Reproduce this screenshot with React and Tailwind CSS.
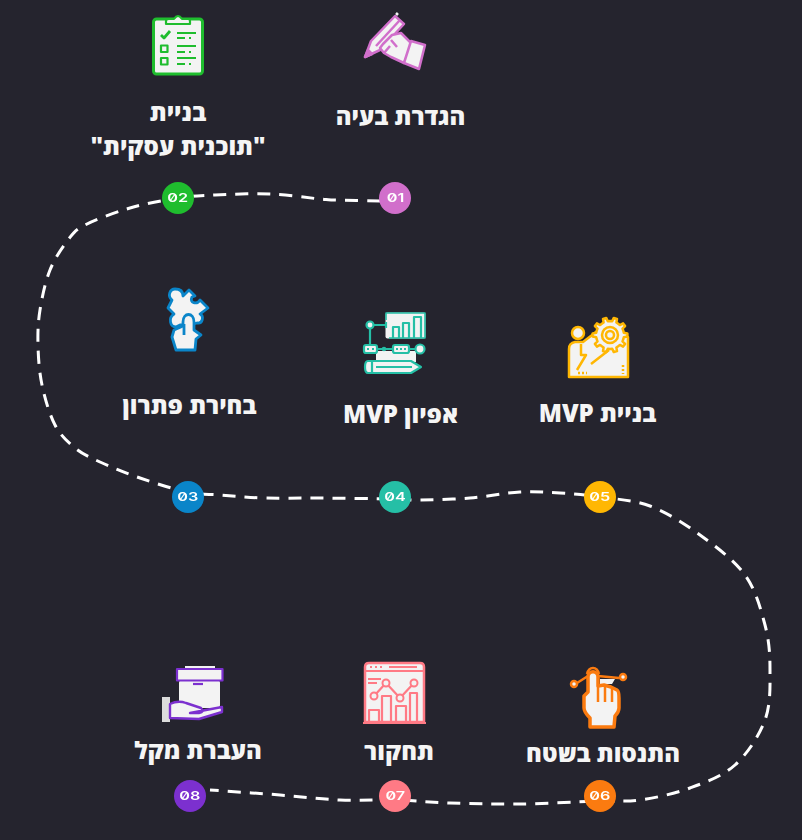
const route = [
  [380, 201], [335, 200], [320, 199], [270, 194], [215, 195], [178, 198], [130, 208], [85, 225], [68, 240], [50, 270], [40, 310],
  [38, 345], [42, 385], [55, 425], [75, 448], [100, 462], [140, 478], [187, 492], [220, 495], [265, 498], [320, 498],
  [394, 499], [420, 500], [470, 498], [520, 492], [560, 493], [600, 497], [650, 506], [700, 535], [745, 575], [765, 625],
  [770, 670], [765, 720], [735, 765], [690, 788], [640, 800], [599, 801], [520, 804], [450, 803], [395, 800], [340, 800], [280, 795], [210, 790],
];

// catmull-rom through the hand picked points
function smooth(pts) {
  let d = `M${pts[0][0]},${pts[0][1]}`;
  for (let i = 0; i < pts.length - 1; i++) {
    const p0 = pts[i - 1] || pts[i];
    const p1 = pts[i];
    const p2 = pts[i + 1];
    const p3 = pts[i + 2] || p2;
    const c1 = [p1[0] + (p2[0] - p0[0]) / 6, p1[1] + (p2[1] - p0[1]) / 6];
    const c2 = [p2[0] - (p3[0] - p1[0]) / 6, p2[1] - (p3[1] - p1[1]) / 6];
    d += ` C${c1[0].toFixed(1)},${c1[1].toFixed(1)} ${c2[0].toFixed(1)},${c2[1].toFixed(1)} ${p2[0]},${p2[1]}`;
  }
  return d;
}

function gear(cx, cy, r1, r2, n) {
  let d = '';
  const step = (Math.PI * 2) / n;
  for (let i = 0; i < n; i++) {
    const a = i * step;
    const pts = [[r1, a - step * 0.5], [r1, a - step * 0.25], [r2, a - step * 0.15], [r2, a + step * 0.15], [r1, a + step * 0.25]];
    pts.forEach(([r, t], j) => {
      d += `${i === 0 && j === 0 ? 'M' : 'L'}${(cx + r * Math.cos(t)).toFixed(1)},${(cy + r * Math.sin(t)).toFixed(1)} `;
    });
  }
  return d + 'Z';
}

const W = '#f3f3f3';

function WriteIcon({ className }) {
  const c = '#d16fcb';
  return (
    <svg viewBox="362 10 68 64" className={`h-[64px] w-[68px] shrink-0 blur-[0.6px] ${className}`} fill={W} stroke={c} strokeWidth="2.500" strokeLinejoin="round">
      <path d="M372,41 L396,16 L405,24 L381,50 L366,57 Z" />
      <path d="M377,46 L401,20" fill="none" />
      <path d="M397,13 L399,15" fill="none" stroke="#f3f3f3" />
      <path d="M366,57 L369,50 L373,54 Z" fill={c} />
      <path d="M384,44 L393,35 L402,33 L413,44 L405,63 L392,57 L385,53 L381,48 Z" />
      <path d="M392,40 L398,47 M385,53 L391,46" fill="none" />
      <path d="M412,41 L426,45 L420,69 L405,63 Z" />
    </svg>
  );
}

function ClipboardIcon({ className }) {
  const c = '#1fbd2e';
  return (
    <svg viewBox="150 10 56 68" className={`h-[68px] w-[56px] shrink-0 blur-[0.6px] ${className}`} fill="none" stroke={c} strokeWidth="2.200" strokeLinejoin="round">
      <rect x="153.500" y="19" width="49" height="55" rx="3" fill={W} strokeWidth="3" />
      <path d="M166,24 V21 Q166,19 169,19 H174 Q178,13 182,19 H188 Q190,19 190,21 V24 Z" fill={W} />
      <path d="M161,35 L164,38 L170,31" strokeWidth="2.800" />
      <path d="M177,33 H196 M177,38 H185 M189,38 H191 M177,46 H196 M177,52 H185 M189,52 H191 M177,58 H196 M177,64 H185 M189,64 H191" strokeWidth="2" />
      <rect x="161" y="45.500" width="6.500" height="6.500" />
      <rect x="161" y="58" width="6.500" height="6.500" />
    </svg>
  );
}

function PuzzleIcon({ className }) {
  const c = '#0a85c9';
  return (
    <svg viewBox="164 285 48 68" className={`h-[68px] w-[48px] shrink-0 blur-[0.6px] ${className}`} fill={W} stroke={c} strokeWidth="2.800" strokeLinejoin="round">
      <path d="M175,289 C170,289 167,296 172,300 L168,308 L174,314 C168,318 170,327 176,327 L180,325 L190,325 L197,323 C203,324 204,316 200,314 L208,308 L200,300 C197,305 189,303 192,297 L195,296 L189,290 L183,296 C183,291 180,289 175,289 Z" />
      <path d="M183,322 C183,312 194,312 194,322 L194,330 L201,335 L196,339 L195,350 L176,350 L172,337 L174,330 L183,326 Z" />
      <path d="M184,324 V335" fill="none" />
    </svg>
  );
}

function ChartIcon({ className }) {
  const c = '#25bfa6';
  return (
    <svg viewBox="360 309 68 68" className={`h-[68px] w-[68px] shrink-0 blur-[0.6px] ${className}`} fill="none" stroke={c} strokeWidth="2.200" strokeLinejoin="round">
      <rect x="384.500" y="312.500" width="40" height="26" rx="2" fill={W} stroke="none" />
      <path d="M385,320 V313 H424 V338 H388" stroke={c} strokeWidth="1.600" />
      <path d="M392,338 V327 H398 V338 M402,338 V323 H408 V338 M413,338 V317 H420 V338" strokeWidth="2.200" />
      <circle cx="369" cy="325" r="3.500" fill={W} />
      <path d="M373,325 H385 M385,322 V328 M369,329 V345" />
      <rect x="375" y="351" width="40" height="11" fill={W} stroke="none" />
      <rect x="363" y="345" width="13" height="8" rx="2" fill={W} />
      <path d="M366,349 H368 M371,349 H373" />
      <path d="M376,349 H392 M408,349 H414" />
      <circle cx="383" cy="349" r="1.200" fill={W} />
      <rect x="392" y="345" width="16" height="8" rx="2" fill={W} />
      <path d="M395,349 H397 M399,349 H401 M403,349 H405" />
      <circle cx="419" cy="349" r="4.500" fill={W} />
      <path d="M367,361 H410 L420,367 L410,373 H367 Q364,373 364,367 Q364,361 367,361 Z" fill={W} />
      <path d="M371,361 V373 M375,367 H411" />
    </svg>
  );
}

function GearIcon({ className }) {
  const c = '#ffb703';
  return (
    <svg viewBox="564 314 68 68" className={`h-[68px] w-[68px] shrink-0 blur-[0.6px] ${className}`} fill={W} stroke={c} strokeWidth="2.500" strokeLinejoin="round">
      <path d="M568,377 V349 Q568,343 574,342 L582,342 L595,332 L627,337 V377 Z" />
      <circle cx="577" cy="333" r="6" />
      <path d="M580,344 V355 H585 L576,370 M590,364 L608,350" fill="none" />
      <path d="M577,373 H586 M622,365 V374" fill="none" strokeDasharray="2 2" />
      <path d={gear(609, 335, 14, 17.500, 10)} />
      <circle cx="609" cy="335" r="8" fill={W} />
      <circle cx="609" cy="335" r="4" fill={W} />
    </svg>
  );
}

function TouchIcon({ className }) {
  const c = '#fb7b10';
  return (
    <svg viewBox="566 662 62 70" className={`h-[70px] w-[62px] shrink-0 blur-[0.6px] ${className}`} fill={W} stroke={c} strokeWidth="3.500" strokeLinejoin="round">
      <path d="M576,683 L587,676 M597,676 L618,678" fill="none" strokeWidth="2.500" />
      <path d="M586,674 C588,666 596,666 598,674" fill="none" strokeWidth="2.500" />
      <circle cx="573" cy="684" r="3" strokeWidth="2.500" />
      <circle cx="622" cy="677" r="3" strokeWidth="2.500" />
      <path d="M599,679 H614 L611,684 H599 Z" stroke="none" />
      <path d="M587,677 C587,670 597,670 597,677 L597,686 L603,685 L610,687 L616,690 Q618,691 618,698 L618,708 Q618,712 614,716 L613,727 L589,727 L589,718 Q583,712 583,708 L583,696 L587,692 Z" />
      <path d="M597,686 V702 M604,686 V702 M611,688 V702" fill="none" strokeWidth="2.500" />
    </svg>
  );
}

function ReportIcon({ className }) {
  const c = '#ff7a85';
  return (
    <svg viewBox="362 660 68 66" className={`h-[66px] w-[68px] shrink-0 blur-[0.6px] ${className}`} fill="none" stroke={c} strokeWidth="2" strokeLinejoin="round">
      <path d="M366,722 V667 Q366,663 370,663 H421 Q425,663 425,667 V722 Z" fill={W} strokeWidth="2.500" />
      <path d="M366,671 H425 M364,723 H427" />
      <path d="M371,667 H373 M376,667 H378 M381,667 H383 M390,667 H418" />
      <path d="M369,679 H382 M369,683 H378" />
      <path d="M370,722 V710 H380 V722 M383,722 V696 H392 V722 M397,722 V706 H407 V722 M411,722 V693 H418 V722" strokeWidth="2.200" />
      <path d="M375,696 L387,683 L401,698 L415,683" strokeWidth="2.200" />
      <circle cx="375" cy="696" r="3.500" fill={W} />
      <circle cx="387" cy="683" r="3.500" fill={W} />
      <circle cx="401" cy="698" r="3.500" fill={W} />
      <circle cx="415" cy="683" r="3.500" fill={W} />
    </svg>
  );
}

function BoxIcon({ className }) {
  const c = '#7c30cf';
  return (
    <svg viewBox="160 664 66 60" className={`h-[60px] w-[66px] shrink-0 blur-[0.6px] ${className}`} fill={W} stroke={c} strokeWidth="2.200" strokeLinejoin="round">
      <rect x="185" y="666" width="30" height="3" stroke="none" />
      <rect x="179" y="680" width="41" height="28" rx="3" stroke="none" />
      <rect x="177" y="669" width="45.500" height="11.500" />
      <path d="M193,684 H203" fill="none" />
      <rect x="162" y="697" width="8" height="25" fill="#dcdcdc" stroke="none" />
      <path d="M170,704 Q178,700 186,703 L201,708 Q205,712 199,713 L190,713 L222,707 L222,712 L199,719 L170,718 Z" strokeWidth="2.400" />
    </svg>
  );
}

function Step({ num, bg, text, Icon, cell, iconClass, labelClass }) {
  return (
    <div className={`flex flex-col items-center justify-end ${cell}`}>
      <Icon className={iconClass} />
      <div dir="rtl" className={`whitespace-pre text-center text-[24px] leading-[34px] font-extrabold text-[#f5f5f5] ${labelClass}`}>
        {text}
      </div>
      <div className={`flex h-8 w-8 shrink-0 items-center justify-center rounded-full ${bg}`}>
        <span className="scale-x-[1.35] font-['Inter',sans-serif] text-[12px] font-semibold text-white slashed-zero">{num}</span>
      </div>
    </div>
  );
}

const steps = [
  { num: '02', bg: 'bg-[#1fbd2e]', text: 'בניית\n"תוכנית עסקית"', Icon: ClipboardIcon, cell: 'col-start-1 row-start-1 pr-[20px]', iconClass: 'mb-[17px]', labelClass: 'mb-[19px]' },
  { num: '01', bg: 'bg-[#d16fcb]', text: 'הגדרת בעיה', Icon: WriteIcon, cell: 'col-start-2 row-start-1', iconClass: 'mb-[25px]', labelClass: 'mb-[49px] ml-[11px]' },
  { num: '03', bg: 'bg-[#0a85c9]', text: 'בחירת פתרון', Icon: PuzzleIcon, cell: 'col-start-1 row-start-2', iconClass: 'mb-[35px]', labelClass: 'mb-[59px] ml-[3px]' },
  { num: '04', bg: 'bg-[#25bfa6]', text: 'אפיון MVP', Icon: ChartIcon, cell: 'col-start-2 row-start-2', iconClass: 'mb-[20px]', labelClass: 'mb-[50px] ml-[11px]' },
  { num: '05', bg: 'bg-[#ffb703]', text: 'בניית MVP', Icon: GearIcon, cell: 'col-start-3 row-start-2', iconClass: 'mb-[14px] mr-[3px]', labelClass: 'mb-[51px] mr-[5px]' },
  { num: '08', bg: 'bg-[#7c30cf]', text: 'העברת מקל', Icon: BoxIcon, cell: 'col-start-1 row-start-3 pl-[4px]', iconClass: 'mb-[9px] ml-[6px]', labelClass: 'mb-[13px] ml-[16px]' },
  { num: '07', bg: 'bg-[#ff7a85]', text: 'תחקור', Icon: ReportIcon, cell: 'col-start-2 row-start-3', iconClass: 'mb-[8px]', labelClass: 'mb-[12px] ml-[8px]' },
  { num: '06', bg: 'bg-[#fb7b10]', text: 'התנסות בשטח', Icon: TouchIcon, cell: 'col-start-3 row-start-3', iconClass: 'mb-[4px] mr-[4px]', labelClass: 'mb-[10px] ml-[6px]' },
];

export default function App() {
  return (
    <div className="relative h-[840px] w-[802px] overflow-hidden bg-[#25242e] font-['Open_Sans','Liberation_Sans',sans-serif]">
      <svg viewBox="0 0 802 840" className="absolute inset-0 h-[840px] w-[802px]" fill="none">
        <path d={smooth(route)} stroke="#fff" strokeWidth="3" strokeDasharray="13 9" />
      </svg>

      <div className="relative grid grid-cols-[206px_208px_202px] grid-rows-[214px_299px_299px] pl-[85px]">
        {steps.map((s) => (
          <Step key={s.num} {...s} />
        ))}
      </div>
    </div>
  );
}
